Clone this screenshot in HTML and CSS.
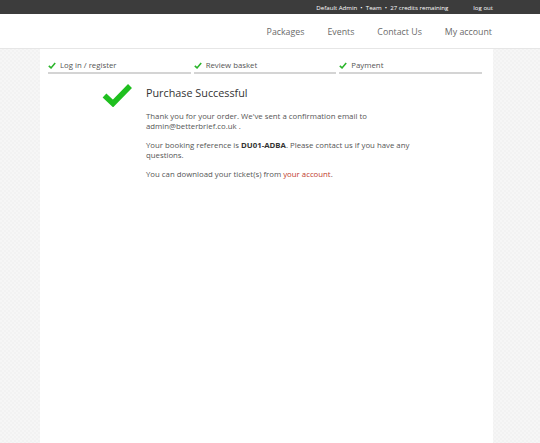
FILE: index.html
```html
<!DOCTYPE html>
<html lang="en">
<head>
<meta charset="utf-8">
<title>Purchase Successful</title>
<link rel="stylesheet" href="styles.css">
</head>
<body>
<div class="topbar">
  <span class="info">Default Admin &nbsp;•&nbsp; Team &nbsp;•&nbsp; 27 credits remaining</span>
  <a class="logout" href="#">log out</a>
</div>
<nav class="nav">
  <a href="#">Packages</a>
  <a href="#">Events</a>
  <a href="#">Contact Us</a>
  <a href="#">My account</a>
</nav>
<main class="page">
  <div class="steps">
    <div class="step"><svg class="tick" viewBox="0 0 10 8"><polyline points="1,4.5 3.8,7 9,1" /></svg>Log in / register</div>
    <div class="step"><svg class="tick" viewBox="0 0 10 8"><polyline points="1,4.5 3.8,7 9,1" /></svg>Review basket</div>
    <div class="step"><svg class="tick" viewBox="0 0 10 8"><polyline points="1,4.5 3.8,7 9,1" /></svg>Payment</div>
  </div>
  <section class="result">
    <svg class="bigcheck" viewBox="0 0 30 24"><polyline points="2.5,12.5 11,20.5 28,3" /></svg>
    <div class="message">
      <h1>Purchase Successful</h1>
      <p>Thank you for your order. We've sent a confirmation email to admin@betterbrief.co.uk .</p>
      <p>Your booking reference is <strong>DU01-ADBA</strong>. Please contact us if you have any questions.</p>
      <p>You can download your ticket(s) from <a href="#">your account</a>.</p>
    </div>
  </section>
</main>
</body>
</html>
```
FILE: styles.css
```css
* { box-sizing: border-box; }
html, body { margin: 0; padding: 0; }
body {
  font-family: "Open Sans", "DejaVu Sans", sans-serif;
  color: #555;
  background-color: #f6f6f6;
  background-image:
    linear-gradient(45deg, #f2f2f2 25%, transparent 25%, transparent 75%, #f2f2f2 75%),
    linear-gradient(45deg, #f2f2f2 25%, transparent 25%, transparent 75%, #f2f2f2 75%);
  background-size: 4px 4px;
  background-position: 0 0, 2px 2px;
  height: 443px;
  overflow: hidden;
}
a { text-decoration: none; }

.topbar {
  height: 14px;
  background: #3c3c3c;
  color: #fff;
  font-size: 6.1px;
  display: flex;
  align-items: center;
  justify-content: flex-end;
  gap: 25px;
  padding-right: 47px;
}
.topbar .logout { color: #fff; }

.nav {
  height: 35px;
  background: #fff;
  border-bottom: 1px solid #e6e6e6;
  display: flex;
  align-items: center;
  justify-content: flex-end;
  gap: 23px;
  padding-right: 48px;
  padding-top: 1px;
}
.nav a {
  color: #6a6a6a;
  font-size: 8.8px;
}

.page {
  margin-left: 40px;
  width: 453px;
  height: 400px;
  background: #fff;
  padding: 10px 11px 0 8px;
}

.steps {
  display: flex;
  gap: 3px;
}
.step {
  flex: 1;
  display: flex;
  align-items: center;
  gap: 4px;
  font-size: 7.8px;
  color: #555;
  border-bottom: 2px solid #d4d4d4;
  height: 15px;
  padding-bottom: 1px;
}
.tick {
  width: 8px;
  height: 7px;
  fill: none;
  stroke: #2bb52b;
  stroke-width: 2;
}

.result {
  display: flex;
  margin-top: 8px;
  padding-left: 54px;
}
.bigcheck {
  width: 30px;
  height: 24px;
  fill: none;
  stroke: #1fbf1f;
  stroke-width: 5.5;
  margin-top: 1px;
  flex: none;
}
.message {
  margin-left: 14px;
  width: 272px;
}
.message h1 {
  font-size: 10.8px;
  font-weight: 400;
  color: #333;
  margin: 4px 0 11px;
  line-height: 14px;
}
.message p {
  font-size: 7.8px;
  line-height: 10px;
  margin: 0 0 9px;
  color: #555;
}
.message strong { color: #333; font-weight: 700; }
.message a { color: #c0392b; }
```
